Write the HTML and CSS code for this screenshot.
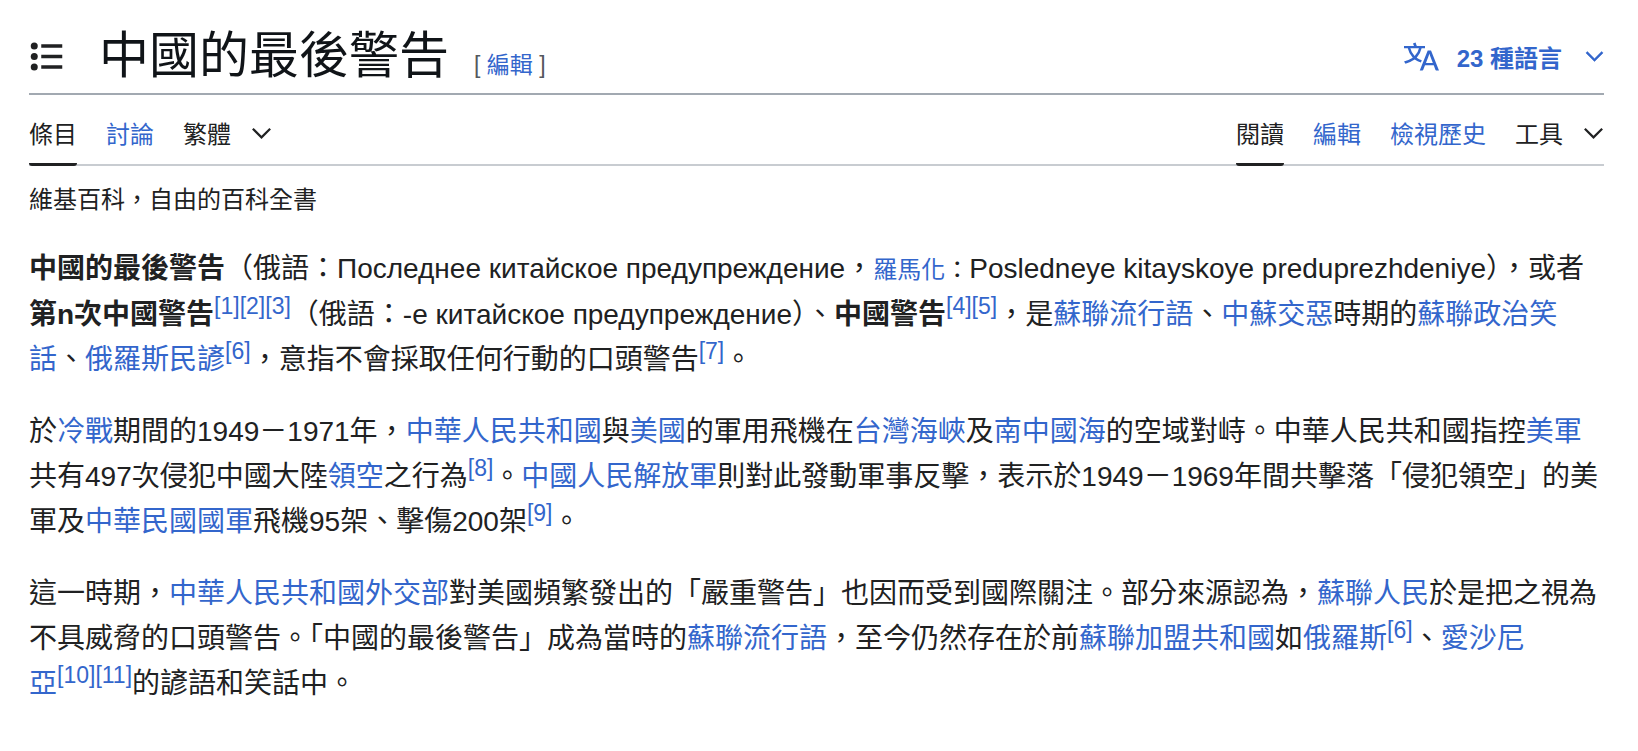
FILE: index.html
```html
<!DOCTYPE html>
<html lang="zh-Hant-TW">
<head>
<meta charset="utf-8">
<title>中國的最後警告</title>
<link rel="stylesheet" href="styles.css">
</head>
<body>
<main class="page">
  <header class="titlebar">
    <button class="icon-button" type="button" aria-label="目錄">
      <svg class="icon" viewBox="0 0 20 20" aria-hidden="true"><path d="M7 15h12v2H7zm0-6h12v2H7zm0-6h12v2H7z"/><circle cx="3" cy="4" r="2"/><circle cx="3" cy="10" r="2"/><circle cx="3" cy="16" r="2"/></svg>
    </button>
    <div class="heading">
      <h1 class="title">中國的最後警告</h1>
      <span class="edit-section">[ <a href="#edit">編輯</a> ]</span>
    </div>
    <button class="languages" type="button">
      <svg class="icon" viewBox="0 0 20 20" aria-hidden="true"><path d="M20 18h-1.44a.6.6 0 0 1-.4-.12.8.8 0 0 1-.23-.31L17 15h-5l-1 2.54a.8.8 0 0 1-.22.3.6.6 0 0 1-.4.14H9l4.55-11.47h1.89zm-3.53-4.31L14.89 9.5a12 12 0 0 1-.39-1.24q-.09.37-.19.69l-.19.56-1.58 4.19zm-6.3-1.58a13.4 13.4 0 0 1-2.91-1.41 11.46 11.46 0 0 0 2.81-5.37H12V4H7.31a4 4 0 0 0-.2-.56C6.87 2.79 6.6 2 6.6 2l-1.47.5s.4.89.6 1.5H0v1.33h2.15A11.23 11.23 0 0 0 5 10.7a17.2 17.2 0 0 1-5 2.1q.56.82.87 1.38a23.3 23.3 0 0 0 5.22-2.51 15.6 15.6 0 0 0 3.56 1.77zM3.63 5.33h4.91a8.1 8.1 0 0 1-2.45 4.45 9.1 9.1 0 0 1-2.46-4.45"/></svg>
      <span class="languages-label">23 種語言</span>
      <svg class="chevron chevron-small" viewBox="0 0 20 20" aria-hidden="true"><path d="m17.5 4.75-7.5 7.5-7.5-7.5L1 6.25l9 9 9-9z"/></svg>
    </button>
  </header>
  <div class="toolbar">
    <nav class="tabs" aria-label="命名空間">
      <a class="tab selected" href="#article">條目</a>
      <a class="tab" href="#talk">討論</a>
      <button class="tab menu" type="button">繁體 <svg class="chevron" viewBox="0 0 20 20" aria-hidden="true"><path d="m17.5 4.75-7.5 7.5-7.5-7.5L1 6.25l9 9 9-9z"/></svg></button>
    </nav>
    <nav class="tabs" aria-label="檢視">
      <a class="tab selected" href="#read">閱讀</a>
      <a class="tab" href="#edit">編輯</a>
      <a class="tab" href="#history">檢視歷史</a>
      <button class="tab menu" type="button">工具 <svg class="chevron" viewBox="0 0 20 20" aria-hidden="true"><path d="m17.5 4.75-7.5 7.5-7.5-7.5L1 6.25l9 9 9-9z"/></svg></button>
    </nav>
  </div>
  <p class="tagline">維基百科，自由的百科全書</p>
  <article class="content">
    <p><b>中國的最後警告</b>（俄語：<span lang="ru">Последнее китайское предупреждение</span>，<span class="small"><a href="#romanization">羅馬化</a>：</span><span lang="ru-Latn">Posledneye kitayskoye preduprezhdeniye</span>），或者<b>第n次中國警告</b><sup><a href="#n1">[1]</a></sup><sup><a href="#n2">[2]</a></sup><sup><a href="#n3">[3]</a></sup>（俄語：<span lang="ru">-е китайское предупреждение</span>）、<b>中國警告</b><sup><a href="#n4">[4]</a></sup><sup><a href="#n5">[5]</a></sup>，是<a href="#a1">蘇聯流行語</a>、<a href="#a2">中蘇交惡</a>時期的<a href="#a3">蘇聯政治笑話</a>、<a href="#a4">俄羅斯民諺</a><sup><a href="#n6">[6]</a></sup>，意指不會採取任何行動的口頭警告<sup><a href="#n7">[7]</a></sup>。</p>
    <p>於<a href="#a5">冷戰</a>期間的1949－1971年，<a href="#a6">中華人民共和國</a>與<a href="#a7">美國</a>的軍用飛機在<a href="#a8">台灣海峽</a>及<a href="#a9">南中國海</a>的空域對峙。中華人民共和國指控<a href="#a10">美軍</a>共有497次侵犯中國大陸<a href="#a11">領空</a>之行為<sup><a href="#n8">[8]</a></sup>。<a href="#a12">中國人民解放軍</a>則對此發動軍事反擊，表示於1949－1969年間共擊落「侵犯領空」的美軍及<a href="#a13">中華民國國軍</a>飛機95架、擊傷200架<sup><a href="#n9">[9]</a></sup>。</p>
    <p>這一時期，<a href="#a14">中華人民共和國外交部</a>對美國頻繁發出的「嚴重警告」也因而受到國際關注。部分來源認為，<a href="#a15">蘇聯人民</a>於是把之視為不具威脅的口頭警告。「中國的最後警告」成為當時的<a href="#a1">蘇聯流行語</a>，至今仍然存在於前<a href="#a16">蘇聯加盟共和國</a>如<a href="#a17">俄羅斯</a><sup><a href="#n6">[6]</a></sup>、<a href="#a18">愛沙尼亞&#8288;</a><sup><a href="#n10">[10]&#8288;</a></sup><sup><a href="#n11">[11]</a></sup>的諺語和笑話中。</p>
  </article>
</main>
</body>
</html>
```

FILE: styles.css
```css
body {
  margin: 0;
  background: #fff;
  color: #202122;
  font-family: "Liberation Sans", "Noto Sans CJK TC", sans-serif;
  font-size: 28px;
  line-height: 45px;
}

a {
  color: #3366cc;
  text-decoration: none;
}

button {
  padding: 0;
  border: 0;
  background: none;
  color: inherit;
  font: inherit;
  cursor: pointer;
}

.page {
  padding: 20px 34px 40px 29px;
}

.titlebar {
  display: flex;
  align-items: center;
  height: 73px;
  border-bottom: 2px solid #a2a9b1;
}

.icon-button {
  display: flex;
  margin-right: 35px;
}

.icon {
  width: 35px;
  height: 35px;
  fill: currentColor;
}

.chevron {
  width: 21px;
  height: 21px;
  fill: currentColor;
}

.chevron-small {
  width: 19px;
  height: 19px;
  stroke: currentColor;
  stroke-width: 0.5;
}

.heading {
  display: flex;
  flex: 1;
  align-items: baseline;
  gap: 25px;
}

.title {
  margin: 0;
  color: #101418;
  font-size: 50px;
  font-weight: 400;
  line-height: 63px;
}

.edit-section {
  color: #54595d;
  font-size: 23px;
}

.languages {
  display: flex;
  align-items: center;
  color: #3366cc;
  font-size: 24px;
  font-weight: 700;
}

.languages-label {
  margin: 0 23px 0 18px;
  padding-top: 4px;
  line-height: 40px;
}

.toolbar {
  display: flex;
  justify-content: space-between;
  border-bottom: 2px solid #c8ccd1;
}

.tabs {
  display: flex;
  gap: 29px;
  margin-bottom: -2px;
}

.tab {
  padding: 20px 0 8px;
  border-bottom: 3px solid transparent;
  font-size: 24px;
  line-height: 40px;
}

.selected {
  border-color: #202122;
  border-radius: 0 0 3px 3px;
  color: #202122;
}

.menu {
  display: flex;
  align-items: center;
  gap: 20px;
}

.menu .chevron {
  margin-bottom: 4px;
}

.tagline {
  margin: 14px 0 26px;
  font-size: 24px;
  line-height: 40px;
}

.content p {
  margin: 0 0 27px;
}

.small {
  font-size: 24px;
}

sup {
  font-size: 23px;
  line-height: 1;
  vertical-align: 10px;
  white-space: nowrap;
}
```
